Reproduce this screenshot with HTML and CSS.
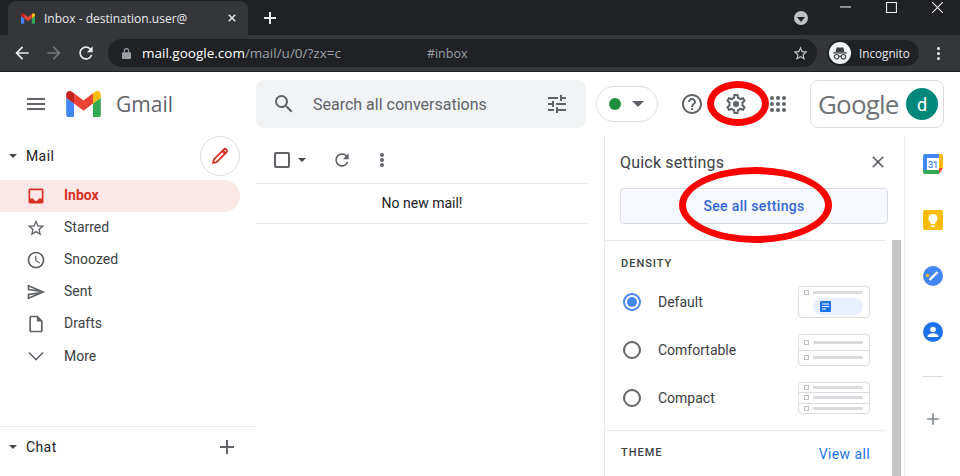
FILE: index.html
```html
<!DOCTYPE html>
<html lang="en">

<head>
  <meta charset="UTF-8">
  <title>Inbox - Gmail</title>
  <link rel="stylesheet" href="styles.css">
</head>

<body>
  <!-- Browser window -->
  <div class="tabstrip">
    <div class="tab">
      <svg class="favicon" viewBox="52 42 88 66">
        <path fill="#4285f4" d="M58 108h14V74L52 59v43c0 3.32 2.69 6 6 6" />
        <path fill="#34a853" d="M120 108h14c3.32 0 6-2.69 6-6V59l-20 15" />
        <path fill="#fbbc04" d="M120 48v26l20-15v-8c0-7.42-8.47-11.65-14.4-7.2" />
        <path fill="#ea4335" d="M72 74V48l24 18 24-18v26L96 92" />
        <path fill="#c5221f" d="M52 51v8l20 15V48l-5.6-4.2c-5.94-4.45-14.4-.22-14.4 7.2" />
      </svg>
      <span class="tab-title">Inbox - destination.user@</span>
      <svg class="tab-close" viewBox="0 0 10 10"><path d="M1 1l8 8M9 1l-8 8" /></svg>
    </div>
    <svg class="new-tab" viewBox="0 0 12 12"><path d="M6 0v12M0 6h12" /></svg>
    <div class="tab-search"><i></i></div>
    <div class="win-controls">
      <svg viewBox="0 0 10 10"><path d="M0 4.500h10" /></svg>
      <svg viewBox="0 0 10 10"><path d="M.5 .5h9v9h-9z" /></svg>
      <svg viewBox="0 0 10 10"><path d="M0 0l10 10M10 0L0 10" /></svg>
    </div>
  </div>

  <div class="toolbar">
    <svg class="nav-icon" viewBox="0 0 24 24"><path fill="#e8eaed" d="M20 11H7.830l5.590-5.590L12 4l-8 8 8 8 1.410-1.410L7.830 13H20v-2z" /></svg>
    <svg class="nav-icon" viewBox="0 0 24 24"><path fill="#737578" d="M12 4l-1.410 1.410L16.170 11H4v2h12.170l-5.580 5.590L12 20l8-8z" /></svg>
    <svg class="nav-icon" viewBox="0 0 24 24"><path fill="#e8eaed" d="M17.650 6.350A7.958 7.958 0 0 0 11.990 4c-4.420 0-7.990 3.580-7.990 8s3.570 8 7.990 8c3.730 0 6.840-2.550 7.730-6h-2.080A5.990 5.990 0 0 1 11.990 18c-3.310 0-6-2.690-6-6s2.690-6 6-6c1.660 0 3.140.69 4.220 1.780L13 11h7V4l-2.350 2.350z" /></svg>
    <div class="omnibox">
      <svg class="lock" viewBox="0 0 10 12"><path fill="#9aa0a6" d="M1 4.500h1V3a3 3 0 0 1 6 0v1.500h1a1 1 0 0 1 1 1V11a1 1 0 0 1-1 1H1a1 1 0 0 1-1-1V5.500a1 1 0 0 1 1-1zM3.200 4.500h3.600V3a1.800 1.800 0 0 0-3.600 0z" /></svg>
      <span class="host">mail.google.com</span>
      <span class="url-path">/mail/u/0/?zx=c</span>
      <span class="url-hash">#inbox</span>
      <svg class="url-star" viewBox="0 0 24 24"><path fill="#c4c7ca" d="M22 9.240l-7.190-.62L12 2 9.190 8.630 2 9.240l5.460 4.730L5.820 21 12 17.270 18.180 21l-1.630-7.030L22 9.240zM12 15.400l-3.760 2.270 1-4.280-3.320-2.880 4.380-.38L12 6.100l1.710 4.040 4.380.38-3.320 2.880 1 4.280L12 15.400z" /></svg>
    </div>
    <div class="incognito">
      <span class="incognito-badge">
        <svg viewBox="0 0 24 24">
          <path fill="#3c4043" d="M3 11h18v1.500H3zM7.500 4.500h9L18 10.500H6z" />
          <circle cx="7.500" cy="17" r="3" fill="none" stroke="#3c4043" stroke-width="1.500" />
          <circle cx="16.500" cy="17" r="3" fill="none" stroke="#3c4043" stroke-width="1.500" />
          <path stroke="#3c4043" stroke-width="1.500" d="M10.500 16.500h3" />
        </svg>
      </span>
      Incognito
    </div>
    <div class="kebab"><i></i><i></i><i></i></div>
  </div>

  <!-- Gmail header -->
  <header class="gm-header">
    <svg class="icon hamburger" viewBox="0 0 24 24"><path d="M3 18h18v-2H3v2zm0-5h18v-2H3v2zm0-7v2h18V6H3z" /></svg>
    <svg class="gm-logo" viewBox="52 42 88 66">
      <path fill="#4285f4" d="M58 108h14V74L52 59v43c0 3.320 2.690 6 6 6" />
      <path fill="#34a853" d="M120 108h14c3.320 0 6-2.690 6-6V59l-20 15" />
      <path fill="#fbbc04" d="M120 48v26l20-15v-8c0-7.420-8.470-11.650-14.400-7.200" />
      <path fill="#ea4335" d="M72 74V48l24 18 24-18v26L96 92" />
      <path fill="#c5221f" d="M52 51v8l20 15V48l-5.600-4.200c-5.940-4.450-14.400-.22-14.400 7.200" />
    </svg>
    <span class="gm-word">Gmail</span>

    <div class="search">
      <svg class="icon" viewBox="0 0 24 24"><path d="M15.500 14h-.79l-.28-.27A6.471 6.471 0 0 0 16 9.500 6.500 6.500 0 1 0 9.500 16c1.610 0 3.090-.59 4.230-1.570l.27.28v.79l5 4.990L20.490 19l-4.990-5zm-6 0C7.010 14 5 11.990 5 9.500S7.010 5 9.500 5 14 7.010 14 9.500 11.990 14 9.500 14z" /></svg>
      <span class="search-text">Search all conversations</span>
      <svg class="icon" viewBox="0 0 24 24"><path d="M3 17v2h6v-2H3zM3 5v2h10V5H3zm10 16v-2h8v-2h-8v-2h-2v6h2zM7 9v2H3v2h4v2h2V9H7zm14 4v-2H11v2h10zm-6-4h2V7h4V5h-4V3h-2v6z" /></svg>
    </div>

    <div class="status-pill"><i class="status-dot"></i><i class="caret"></i></div>

    <svg class="icon help" viewBox="0 0 24 24"><path d="M11 18h2v-2h-2v2zm1-16C6.480 2 2 6.480 2 12s4.480 10 10 10 10-4.480 10-10S17.520 2 12 2zm0 18c-4.410 0-8-3.590-8-8s3.590-8 8-8 8 3.590 8 8-3.590 8-8 8zm0-14c-2.210 0-4 1.790-4 4h2c0-1.100.9-2 2-2s2 .9 2 2c0 2-3 1.750-3 5h2c0-2.250 3-2.500 3-5 0-2.210-1.790-4-4-4z" /></svg>
    <svg class="icon gear" viewBox="0 0 24 24">
      <path d="M19.430 12.980c.04-.32.07-.64.07-.98 0-.34-.03-.66-.07-.98l2.110-1.650c.19-.15.24-.42.12-.64l-2-3.460c-.09-.16-.26-.25-.44-.25-.06 0-.12.01-.17.03l-2.490 1c-.52-.4-1.080-.73-1.690-.98l-.38-2.650C14.460 2.180 14.250 2 14 2h-4c-.25 0-.46.18-.49.42l-.38 2.650c-.61.25-1.170.59-1.690.98l-2.490-1c-.06-.02-.12-.03-.18-.03-.17 0-.34.09-.43.25l-2 3.460c-.13.22-.07.49.12.64l2.110 1.650c-.04.32-.07.65-.07.98 0 .33.03.66.07.98l-2.110 1.650c-.19.15-.24.42-.12.64l2 3.460c.09.16.26.25.44.25.06 0 .12-.01.17-.03l2.490-1c.52.4 1.080.73 1.690.98l.38 2.650c.03.24.24.42.49.42h4c.25 0 .46-.18.49-.42l.38-2.650c.61-.25 1.170-.59 1.690-.98l2.490 1c.06.02.12.03.18.03.17 0 .34-.09.43-.25l2-3.460c.12-.22.07-.49-.12-.64l-2.110-1.650zm-1.980-1.710c.04.31.05.52.05.73 0 .21-.02.43-.05.73l-.14 1.130.89.7 1.080.84-.7 1.210-1.270-.51-1.040-.42-.9.68c-.43.32-.84.56-1.250.73l-1.060.43-.16 1.130-.2 1.350h-1.400l-.19-1.350-.16-1.130-1.060-.43c-.43-.18-.83-.41-1.230-.71l-.91-.7-1.060.43-1.270.51-.7-1.210 1.080-.84.89-.7-.14-1.130c-.03-.31-.05-.54-.05-.74s.02-.43.05-.73l.14-1.130-.89-.7-1.080-.84.7-1.210 1.270.51 1.040.42.9-.68c.43-.32.84-.56 1.250-.73l1.060-.43.16-1.130.2-1.350h1.390l.19 1.350.16 1.130 1.060.43c.43.18.83.41 1.230.71l.91.7 1.060-.43 1.270-.51.7 1.210-1.070.85-.89.7.14 1.130z" />
      <circle cx="12" cy="12" r="3" />
    </svg>
    <div class="apps">
      <i></i><i></i><i></i><i></i><i></i><i></i><i></i><i></i><i></i>
    </div>
    <div class="account">
      <span class="google-word">Google</span>
      <span class="avatar">d</span>
    </div>
  </header>

  <div class="main">
    <!-- Left nav -->
    <nav class="sidebar">
      <div class="section-head">
        <i class="caret"></i>
        <span class="section-name">Mail</span>
        <span class="compose">
          <svg viewBox="0 0 24 24"><path d="M4.500 19.500l.8-3.800L16.300 4.700a1.700 1.700 0 0 1 2.400 0l.6.6a1.700 1.700 0 0 1 0 2.400L8.300 18.700z" /><path class="tip" d="M14.800 6.200l3 3" /></svg>
        </span>
      </div>

      <ul class="nav-list">
        <li class="nav-item active">
          <svg class="icon" viewBox="0 0 24 24"><path d="M19 3H5c-1.100 0-2 .9-2 2v14c0 1.100.9 2 2 2h14c1.100 0 2-.9 2-2V5c0-1.100-.9-2-2-2zm0 12h-4c0 1.660-1.350 3-3 3s-3-1.340-3-3H5V5h14v10z" /></svg>
          <span>Inbox</span>
        </li>
        <li class="nav-item">
          <svg class="icon" viewBox="0 0 24 24"><path d="M22 9.240l-7.190-.62L12 2 9.190 8.630 2 9.240l5.460 4.730L5.820 21 12 17.270 18.180 21l-1.630-7.030L22 9.240zM12 15.400l-3.760 2.270 1-4.280-3.320-2.880 4.380-.38L12 6.100l1.710 4.040 4.380.38-3.320 2.880 1 4.280L12 15.400z" /></svg>
          <span>Starred</span>
        </li>
        <li class="nav-item">
          <svg class="icon" viewBox="0 0 24 24"><path d="M11.990 2C6.470 2 2 6.480 2 12s4.470 10 9.990 10C17.520 22 22 17.520 22 12S17.520 2 11.990 2zM12 20c-4.420 0-8-3.580-8-8s3.580-8 8-8 8 3.580 8 8-3.580 8-8 8zm.5-13H11v6l5.250 3.150.75-1.230-4.500-2.670z" /></svg>
          <span>Snoozed</span>
        </li>
        <li class="nav-item">
          <svg class="icon" viewBox="0 0 24 24"><path d="M4.010 6.030l7.510 3.220-7.520-1 .01-2.220m7.500 8.720L4 17.970v-2.220l7.510-1M2.010 3L2 10l15 2-15 2 .01 7L23 12 2.010 3z" /></svg>
          <span>Sent</span>
        </li>
        <li class="nav-item">
          <svg class="icon" viewBox="0 0 24 24"><path d="M14 2H6c-1.100 0-1.990.9-1.990 2L4 20c0 1.100.89 2 1.990 2H18c1.100 0 2-.9 2-2V8l-6-6zm4 18H6V4h7v5h5v11z" /></svg>
          <span>Drafts</span>
        </li>
        <li class="nav-item more">
          <svg class="chevron" viewBox="0 0 20 20"><path d="M3 6.500l7 7 7-7" /></svg>
          <span>More</span>
        </li>
      </ul>

      <div class="chat-head">
        <i class="caret"></i>
        <span class="section-name">Chat</span>
        <svg class="icon chat-add" viewBox="0 0 24 24"><path d="M19 13h-6v6h-2v-6H5v-2h6V5h2v6h6v2z" /></svg>
      </div>
    </nav>

    <!-- Message list -->
    <section class="mail-list">
      <div class="list-tools">
        <span class="checkbox"></span>
        <i class="caret"></i>
        <svg class="icon refresh" viewBox="0 0 24 24"><path d="M17.650 6.350A7.958 7.958 0 0 0 11.990 4c-4.420 0-7.990 3.580-7.990 8s3.570 8 7.990 8c3.730 0 6.840-2.550 7.730-6h-2.080A5.990 5.990 0 0 1 11.990 18c-3.310 0-6-2.690-6-6s2.690-6 6-6c1.660 0 3.140.69 4.220 1.780L13 11h7V4l-2.350 2.350z" /></svg>
        <div class="kebab dark"><i></i><i></i><i></i></div>
      </div>
      <div class="no-mail">No new mail!</div>
    </section>

    <!-- Quick settings -->
    <aside class="settings">
      <div class="settings-top">
        <div class="settings-title">
          <span>Quick settings</span>
          <svg class="icon" viewBox="0 0 24 24"><path d="M19 6.410L17.590 5 12 10.590 6.410 5 5 6.410 10.590 12 5 17.590 6.410 19 12 13.410 17.590 19 19 17.590 13.410 12z" /></svg>
        </div>
        <div class="see-all">See all settings</div>
      </div>
      <div class="settings-scroll">
        <div class="settings-body">
          <div class="density">
            <div class="group-label">DENSITY</div>
            <div class="density-row">
              <span class="radio on"></span>
              <span class="density-name">Default</span>
              <div class="thumb">
                <div class="thumb-row"><b></b><u></u></div>
                <div class="thumb-pill">
                  <svg viewBox="0 0 11 11">
                    <rect width="11" height="11" rx="1" fill="#1a73e8" />
                    <path stroke="#fff" d="M2 3h7M2 5.500h7M2 8h4" />
                  </svg>
                </div>
              </div>
            </div>
            <div class="density-row">
              <span class="radio"></span>
              <span class="density-name">Comfortable</span>
              <div class="thumb">
                <div class="thumb-row"><b></b><u></u></div>
                <div class="thumb-row"><b></b><u></u></div>
              </div>
            </div>
            <div class="density-row">
              <span class="radio"></span>
              <span class="density-name">Compact</span>
              <div class="thumb">
                <div class="thumb-row"><b></b><u></u></div>
                <div class="thumb-row"><b></b><u></u></div>
                <div class="thumb-row"><b></b><u></u></div>
              </div>
            </div>
          </div>
          <div class="theme">
            <span class="group-label">THEME</span>
            <span class="view-all">View all</span>
          </div>
        </div>
        <div class="scrollbar"></div>
      </div>
    </aside>

    <!-- Side add-ons -->
    <div class="addons">
      <svg class="addon" viewBox="0 0 20 20">
        <path fill="#4285f4" d="M2 0h14v4H4v12H0V2a2 2 0 0 1 2-2z" />
        <path fill="#fbbc04" d="M16 0h2a2 2 0 0 1 2 2v2h-4zM16 4h4v10h-4z" />
        <path fill="#34a853" d="M4 16h12v4H2a2 2 0 0 1-2-2v-2h4z" />
        <path fill="#ea4335" d="M16 14h4l-4 6z" />
        <path fill="#fff" d="M4 4h12v12H4z" />
        <text x="10" y="13.500" class="cal-num">31</text>
      </svg>
      <svg class="addon" viewBox="0 0 20 20">
        <rect width="20" height="20" rx="2" fill="#fbbc04" />
        <path fill="#fff" d="M8 15.500h4V17H8zM10 4a4.500 4.500 0 0 0-2.300 8.400v1.600h4.600v-1.600A4.500 4.500 0 0 0 10 4z" />
      </svg>
      <svg class="addon" viewBox="0 0 20 20">
        <circle cx="10" cy="10" r="10" fill="#4285f4" />
        <path fill="none" stroke="#fff" stroke-width="2.400" d="M6.500 14l8-8" />
        <circle cx="4.500" cy="9.500" r="1.700" fill="#fbbc04" />
      </svg>
      <svg class="addon" viewBox="0 0 20 20">
        <circle cx="10" cy="10" r="10" fill="#1a73e8" />
        <circle cx="10" cy="7.500" r="2.800" fill="#fff" />
        <path fill="#fff" d="M4.500 14.500c0-2 3.700-3.200 5.500-3.200s5.500 1.200 5.500 3.200v.5h-11z" />
      </svg>
      <div class="addon-line"></div>
      <svg class="icon addon-add" viewBox="0 0 24 24"><path d="M19 13h-6v6h-2v-6H5v-2h6V5h2v6h6v2z" /></svg>
    </div>
  </div>

  <!-- Red marks drawn over the screenshot -->
  <div class="mark mark-gear"></div>
  <div class="mark mark-see-all"></div>
</body>

</html>
```

FILE: styles.css
```css
* {
  box-sizing: border-box;
}

html,
body {
  margin: 0;
  padding: 0;
  height: 476px;
  overflow: hidden;
  background-color: #fff;
  font-family: Roboto, Arial, sans-serif;
  color: #202124;
}

svg {
  display: block;
  flex: none;
}

ul {
  list-style: none;
  margin: 0;
  padding: 0;
}

.icon {
  width: 24px;
  height: 24px;
  fill: #5f6368;
}

.caret {
  display: block;
  flex: none;
  width: 0;
  height: 0;
  border-left: 4px solid transparent;
  border-right: 4px solid transparent;
  border-top: 4px solid #444746;
}

/* Browser tabs */
.tabstrip {
  display: flex;
  align-items: flex-end;
  height: 35px;
  padding-left: 8px;
  background-color: #202124;
}

.tab {
  display: flex;
  align-items: center;
  width: 240px;
  height: 34px;
  padding: 0 11px 0 13px;
  background-color: #35363a;
  border-radius: 8px 8px 0 0;
  color: #e8eaed;
  font-family: "Open Sans", Arial, sans-serif;
  font-size: 12px;
}

.favicon {
  width: 14px;
  height: 11px;
  margin-right: 9px;
}

.tab-title {
  white-space: nowrap;
}

.tab-close {
  width: 8px;
  height: 8px;
  margin-left: auto;
  margin-right: 1px;
  fill: none;
  stroke: #e8eaed;
  stroke-width: 1.8;
}

.new-tab {
  width: 12px;
  height: 12px;
  margin: 0 0 11px 16px;
  fill: none;
  stroke: #e8eaed;
  stroke-width: 2;
}

.tab-search {
  display: flex;
  align-items: center;
  justify-content: center;
  width: 14px;
  height: 14px;
  margin: 0 0 10px 518px;
  background-color: #bdc1c6;
  border-radius: 50%;
}

.tab-search i {
  width: 0;
  height: 0;
  margin-top: 2px;
  border-left: 4px solid transparent;
  border-right: 4px solid transparent;
  border-top: 5px solid #202124;
}

.win-controls {
  display: flex;
  align-self: flex-start;
  gap: 35px;
  margin: 2px 0 0 32px;
}

.win-controls svg {
  width: 11px;
  height: 11px;
  fill: none;
  stroke: #e8eaed;
  stroke-width: 1;
}

/* Browser toolbar */
.toolbar {
  display: flex;
  align-items: center;
  height: 37px;
  padding-left: 12px;
  background-color: #35363a;
  border-bottom: 1px solid #202124;
}

.nav-icon {
  width: 20px;
  height: 20px;
  margin-right: 12px;
}

.omnibox {
  display: flex;
  align-items: center;
  width: 709px;
  height: 28px;
  padding-left: 14px;
  background-color: #202124;
  border-radius: 14px;
  color: #e8eaed;
  font-family: "Open Sans", Arial, sans-serif;
  font-size: 13.5px;
  white-space: nowrap;
}

.lock {
  width: 9px;
  height: 11px;
  margin-right: 11px;
}

.host {
  color: #fff;
}

.url-path,
.url-hash {
  color: #9aa0a6;
}

.url-path {
  width: 95px;
}

.url-hash {
  width: 40px;
  margin-left: 87px;
  font-size: 12.500px;
}

.url-star {
  width: 17px;
  height: 17px;
  margin-left: auto;
  margin-right: 8px;
}

.incognito {
  display: flex;
  align-items: center;
  width: 92px;
  height: 26px;
  margin-left: 10px;
  padding-left: 2px;
  background-color: #202124;
  border-radius: 13px;
  color: #e8eaed;
  font-family: "Open Sans", Arial, sans-serif;
  font-size: 11.7px;
}

.incognito-badge {
  display: flex;
  align-items: center;
  justify-content: center;
  width: 22px;
  height: 22px;
  margin-right: 8px;
  background-color: #f1f3f4;
  border-radius: 50%;
}

.incognito-badge svg {
  width: 18px;
  height: 18px;
}

.kebab {
  display: flex;
  flex-direction: column;
  gap: 2px;
  margin-left: 18px;
}

.kebab i {
  display: block;
  width: 3px;
  height: 3px;
  background-color: #e8eaed;
  border-radius: 50%;
}

/* Gmail header */
.gm-header {
  display: flex;
  align-items: center;
  height: 64px;
  padding-left: 24px;
}

.hamburger {
  margin-right: 18px;
}

.gm-logo {
  width: 35px;
  height: 26px;
  margin-right: 15px;
}

.gm-word {
  width: 140px;
  color: #5f6368;
  font-family: "Open Sans", Arial, sans-serif;
  font-size: 21px;
}

.search {
  display: flex;
  align-items: center;
  width: 330px;
  height: 48px;
  padding: 0 17px 0 16px;
  background-color: #f1f3f4;
  border-radius: 8px;
}

.search-text {
  flex: 1;
  margin-left: 17px;
  color: #5f6368;
  font-size: 16px;
}

.status-pill {
  display: flex;
  align-items: center;
  width: 62px;
  height: 36px;
  margin-left: 10px;
  padding-left: 12px;
  border: 1px solid #dadce0;
  border-radius: 18px;
}

.status-dot {
  display: block;
  width: 12px;
  height: 12px;
  margin-right: 11px;
  background-color: #1e8e3e;
  border-radius: 50%;
}

.status-pill .caret {
  border-top-color: #5f6368;
  border-left-width: 6px;
  border-right-width: 6px;
  border-top-width: 6px;
}

.help {
  margin-left: 22px;
}

.gear {
  margin-left: 20px;
}

.apps {
  display: grid;
  grid-template-columns: repeat(3, 4px);
  gap: 2px;
  margin-left: 22px;
}

.apps i {
  display: block;
  width: 4px;
  height: 4px;
  background-color: #5f6368;
  border-radius: 50%;
}

.account {
  display: flex;
  align-items: center;
  justify-content: space-between;
  width: 134px;
  height: 48px;
  margin-left: 24px;
  padding: 0 5px 0 7px;
  border: 1px solid #dadce0;
  border-radius: 8px;
}

.google-word {
  color: #6f7276;
  font-family: "Open Sans", Arial, sans-serif;
  font-size: 26px;
  letter-spacing: -0.8px;
}

.avatar {
  display: flex;
  align-items: center;
  justify-content: center;
  width: 32px;
  height: 32px;
  background-color: #00897b;
  border-radius: 50%;
  color: #fff;
  font-size: 18px;
}

/* Page columns */
.main {
  display: flex;
  height: 340px;
}

.sidebar {
  display: flex;
  flex-direction: column;
  width: 256px;
}

.section-head {
  display: flex;
  align-items: center;
  height: 44px;
  padding: 0 0 4px 9px;
}

.section-name {
  margin-left: 9px;
  font-size: 14px;
  letter-spacing: 0.4px;
}

.compose {
  display: flex;
  align-items: center;
  justify-content: center;
  width: 40px;
  height: 40px;
  margin-left: auto;
  margin-right: 16px;
  border: 1px solid #dadce0;
  border-radius: 50%;
}

.compose svg {
  width: 22px;
  height: 22px;
  fill: none;
  stroke: #d93025;
  stroke-width: 2;
}

.compose .tip {
  stroke-width: 3;
}

.nav-list {
  flex: 1;
}

.nav-item {
  display: flex;
  align-items: center;
  width: 240px;
  height: 32px;
  padding-left: 26px;
  border-radius: 0 16px 16px 0;
  color: #3c4043;
  font-size: 14px;
}

.nav-item .icon {
  width: 20px;
  height: 20px;
  margin-right: 18px;
}

.nav-item span {
  margin-bottom: 2px;
}

.nav-item.more span {
  margin-bottom: 0;
}

.chevron {
  width: 20px;
  height: 20px;
  margin-right: 18px;
  fill: none;
  stroke: #5f6368;
  stroke-width: 1.6;
}

.nav-item.active {
  background-color: #fce8e6;
  color: #d93025;
  font-weight: 700;
}

.nav-item.active .icon {
  fill: #d93025;
}

.chat-head {
  display: flex;
  align-items: center;
  height: 41px;
  margin-bottom: 9px;
  padding: 0 17px 0 9px;
  border-top: 1px solid #e8eaed;
}

.chat-add {
  margin-left: auto;
}

.mail-list {
  width: 348px;
  padding-right: 16px;
}

.list-tools {
  display: flex;
  align-items: center;
  height: 48px;
  padding-left: 18px;
  border-bottom: 1px solid #e8eaed;
}

.checkbox {
  width: 16px;
  height: 16px;
  border: 2px solid #5f6368;
  border-radius: 2px;
}

.list-tools .caret {
  margin-left: 8px;
}

.refresh {
  width: 20px;
  height: 20px;
  margin-left: 26px;
}

.kebab.dark {
  gap: 1px;
  margin-left: 28px;
}

.kebab.dark i {
  background-color: #5f6368;
  width: 4px;
  height: 4px;
}

.no-mail {
  height: 40px;
  border-bottom: 1px solid #e8eaed;
  font-size: 14px;
  line-height: 39px;
  text-align: center;
}

/* Quick settings panel */
.settings {
  display: flex;
  flex-direction: column;
  width: 301px;
  border-left: 1px solid #e8eaed;
  border-right: 1px solid #e8eaed;
}

.settings-top {
  height: 104px;
  padding: 0 0 0 15px;
}

.settings-title {
  display: flex;
  align-items: center;
  justify-content: space-between;
  height: 52px;
  padding-right: 16px;
  color: #3c4043;
  font-size: 16px;
  letter-spacing: 0.2px;
}

.settings-title .icon {
  width: 20px;
  height: 20px;
}

.see-all {
  width: 268px;
  height: 36px;
  background-color: #f6f9fe;
  border: 1px solid #dadce0;
  border-radius: 4px;
  color: #3367d6;
  font-size: 14px;
  font-weight: 500;
  letter-spacing: 0.35px;
  line-height: 34px;
  text-align: center;
}

.settings-scroll {
  display: flex;
  flex: 1;
  min-height: 0;
  margin-right: 3px;
}

.settings-body {
  width: 281px;
  margin-right: 6px;
  border-top: 1px solid #e8eaed;
}

.scrollbar {
  width: 9px;
  background-color: #c6c6c6;
}

.density {
  height: 190px;
  padding: 16px 16px 0 16px;
  border-bottom: 1px solid #e8eaed;
}

.group-label {
  color: #3c4043;
  font-size: 11px;
  font-weight: 500;
  letter-spacing: 1px;
}

.density > .group-label {
  margin-bottom: 8px;
}

.density-row {
  display: flex;
  align-items: center;
  height: 48px;
}

.radio {
  position: relative;
  width: 18px;
  height: 18px;
  margin-left: 2px;
  border: 2px solid #5f6368;
  border-radius: 50%;
}

.radio.on {
  border-color: #4285f4;
}

.radio.on::after {
  content: "";
  position: absolute;
  inset: 2px;
  background-color: #4285f4;
  border-radius: 50%;
}

.density-name {
  flex: 1;
  margin-left: 17px;
  color: #3c4043;
  font-size: 14px;
}

.thumb {
  display: flex;
  flex-direction: column;
  width: 72px;
  height: 32px;
  border: 1px solid #dadce0;
  border-radius: 4px;
}

.thumb-row {
  display: flex;
  flex: 1;
  align-items: center;
  padding: 0 6px 0 5px;
}

.thumb-row + .thumb-row {
  border-top: 1px solid #dadce0;
}

.thumb-row b {
  width: 5px;
  height: 5px;
  margin-right: 4px;
  border: 1px solid #bdc1c6;
}

.thumb-row u {
  flex: 1;
  height: 3px;
  background-color: #dadce0;
  border-radius: 1px;
}

.thumb-pill {
  display: flex;
  align-items: center;
  width: 50px;
  height: 17px;
  margin: 0 0 2px 14px;
  padding-left: 7px;
  background-color: #e8f0fe;
  border-radius: 8px;
}

.thumb-pill svg {
  width: 11px;
  height: 11px;
}

.theme {
  display: flex;
  justify-content: space-between;
  padding: 15px 16px 0 16px;
}

.view-all {
  color: #1a73e8;
  font-size: 14px;
  letter-spacing: 0.4px;
}

/* Add-ons strip */
.addons {
  display: flex;
  flex-direction: column;
  align-items: center;
  width: 55px;
}

.addon {
  width: 20px;
  height: 20px;
  margin-top: 36px;
}

.addon:first-child {
  margin-top: 18px;
}

.cal-num {
  fill: #4285f4;
  font-family: Roboto, Arial, sans-serif;
  font-size: 9px;
  font-weight: 500;
  text-anchor: middle;
}

.addon-line {
  width: 20px;
  height: 1px;
  margin-top: 34px;
  background-color: #dadce0;
}

.addon-add {
  margin-top: 32px;
  width: 20px;
  height: 20px;
  fill: #80868b;
}

/* Red annotations */
.mark {
  position: absolute;
  border: 7px solid #f00;
  border-radius: 50%;
}

.mark-gear {
  left: 707px;
  top: 81px;
  width: 62px;
  height: 45px;
}

.mark-see-all {
  left: 679px;
  top: 167px;
  width: 153px;
  height: 76px;
}
```
